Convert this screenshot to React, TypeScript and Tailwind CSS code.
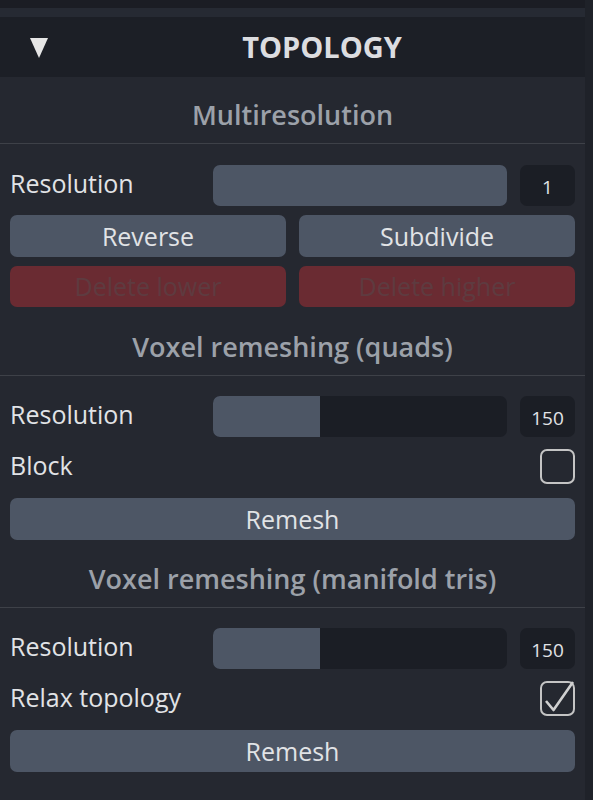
import React from "react";

const SectionTitle: React.FC<{ title: string; className?: string }> = ({ title, className = "" }) => (
	<div
		className={
			"border-b border-[#3e4148] pb-[13px] text-center text-[27px] font-semibold leading-[30px] text-[#9ca1a9] " +
			className
		}
	>
		{title}
	</div>
);

const SliderRow: React.FC<{ value: string; fill: number }> = ({ value, fill }) => (
	<div className="flex h-[41px] items-center">
		<label className="w-[203px] pb-[4px] text-[25px] leading-none text-[#e1e3e6]">Resolution</label>
		<div className="flex h-full w-[294px] overflow-hidden rounded-[7px] bg-[#1b1e25]">
			<div className="h-full bg-[#4d5665]" style={{ width: `${fill}%` }} />
		</div>
		<div className="ml-[13px] flex h-full w-[55px] items-center justify-center rounded-[7px] bg-[#1b1e25] pt-[3px] text-[19px] text-[#e1e3e6]">
			{value}
		</div>
	</div>
);

const Button: React.FC<{ text: string; danger?: boolean; className?: string }> = ({ text, danger, className = "" }) => (
	<button
		className={
			"rounded-[7px] text-[25px] leading-none " +
			(danger ? "bg-[#6a2b32] text-[#5e3b40] " : "bg-[#4d5665] text-[#e1e3e6] ") +
			className
		}
	>
		{text}
	</button>
);

const CheckRow: React.FC<{ label: string; checked?: boolean }> = ({ label, checked }) => (
	<div className="mt-[12px] flex h-[35px] items-center justify-between">
		<label className="pb-[3px] text-[25px] leading-none text-[#e1e3e6]">{label}</label>
		<svg width="36" height="36" viewBox="0 0 36 36" className="mr-[-1px]">
			<rect x="1" y="1" width="33" height="33" rx="6" fill="none" stroke="#c4c4c4" strokeWidth="2" />
			{checked && (
				<path d="M6 20 L13.5 29 L33 1" fill="none" stroke="#d0d0d0" strokeWidth="2.6" strokeLinejoin="round" />
			)}
		</svg>
	</div>
);

export default function App() {
	return (
		<div className="flex h-[800px] w-[593px] overflow-hidden bg-[#1b1d24] font-['Open_Sans',sans-serif]">
			<div className="flex w-[585px] flex-col">
				<div className="mt-[8px] h-[9px] bg-[#262a33]" />
				<div className="relative flex h-[60px] items-center justify-center bg-[#1c1f26]">
					<svg width="18" height="20" viewBox="0 0 18 20" className="absolute left-[30px] top-[21px]">
						<polygon points="0,0 18,0 9,20" fill="#e6e6e6" />
					</svg>
					<span className="ml-[59px] text-[29px] font-bold text-[#dcdde0]">TOPOLOGY</span>
				</div>
				<div className="flex-1 bg-[#252830]">
					<SectionTitle title="Multiresolution" className="mt-[23px]" />
					<div className="flex flex-col px-[10px] pt-[21px]">
						<SliderRow value="1" fill={100} />
						<div className="mt-[9px] flex gap-[13px]">
							<Button text="Reverse" className="h-[42px] flex-1" />
							<Button text="Subdivide" className="h-[42px] flex-1" />
						</div>
						<div className="mt-[9px] flex gap-[13px]">
							<Button text="Delete lower" danger className="h-[41px] flex-1" />
							<Button text="Delete higher" danger className="h-[41px] flex-1" />
						</div>
					</div>
					<SectionTitle title="Voxel remeshing (quads)" className="mt-[25px]" />
					<div className="flex flex-col px-[10px] pt-[20px]">
						<SliderRow value="150" fill={36.5} />
						<CheckRow label="Block" />
						<Button text="Remesh" className="mt-[14px] h-[42px] w-full" />
					</div>
					<SectionTitle title="Voxel remeshing (manifold tris)" className="mt-[24px]" />
					<div className="flex flex-col px-[10px] pt-[20px]">
						<SliderRow value="150" fill={36.5} />
						<CheckRow label="Relax topology" checked />
						<Button text="Remesh" className="mt-[14px] h-[42px] w-full" />
					</div>
				</div>
			</div>
			<div className="w-[8px] bg-[#1f2229]" />
		</div>
	);
}
